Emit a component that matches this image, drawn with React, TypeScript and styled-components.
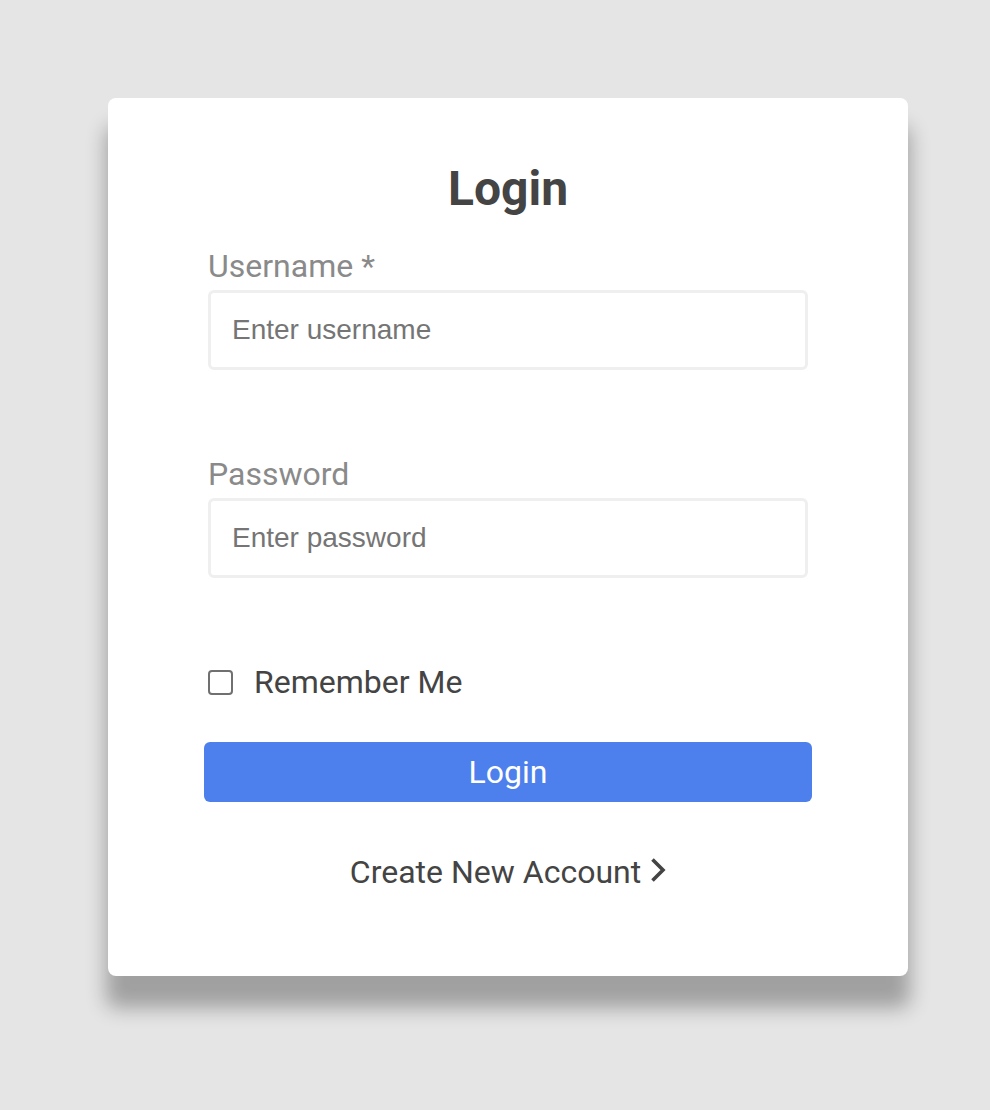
import React from "react";
import styled, { createGlobalStyle } from "styled-components";

const Global = createGlobalStyle`
  html, body { margin: 0; padding: 0; background: #e5e5e5; }
  body { font-family: Roboto, "Liberation Sans", sans-serif; }
  * { box-sizing: border-box; }
`;

const Page = styled.div`
  min-height: 1110px;
  padding: 98px 0 0 26px;
  display: flex;
  justify-content: center;
  align-items: flex-start;
`;

const Card = styled.form`
  width: 800px;
  background: #ffffff;
  border-radius: 8px;
  box-shadow: 0 30px 20px 2px rgba(0, 0, 0, 0.3);
  padding: 63px 100px 85px;
  display: flex;
  flex-direction: column;
`;

const Title = styled.h1`
  margin: 0 0 30px;
  font-family: Roboto, sans-serif;
  font-weight: 700;
  font-size: 48px;
  line-height: 56px;
  color: #444444;
  text-align: center;
`;

const Field = styled.div<{ $gap: number }>`
  display: flex;
  flex-direction: column;
  gap: 5px;
  margin-bottom: ${(p) => p.$gap}px;
`;

const Label = styled.label`
  font-family: Roboto, sans-serif;
  font-size: 32px;
  color: #8a8a8a;
`;

const Input = styled.input`
  width: 600px;
  height: 80px;
  border: 3px solid #efefef;
  border-radius: 6px;
  padding: 0 21px;
  font-family: "Liberation Sans", Arial, sans-serif;
  font-size: 28px;
  color: #333;
  outline: none;
  &::placeholder { color: #757575; }
`;

const CheckRow = styled.label`
  display: flex;
  align-items: center;
  gap: 21px;
  font-family: Roboto, sans-serif;
  font-size: 32px;
  color: #444444;
  margin-bottom: 41px;
`;

const Check = styled.input`
  appearance: none;
  margin: 0;
  width: 25px;
  height: 25px;
  border: 2px solid #707070;
  border-radius: 4px;
  background: #fff;
`;

const Button = styled.button`
  margin: 0 -4px;
  height: 60px;
  border: none;
  border-radius: 6px;
  background: #4d80ec;
  color: #ffffff;
  font-family: Roboto, sans-serif;
  font-size: 32px;
  cursor: pointer;
`;

const CreateLink = styled.a`
  margin-top: 51px;
  align-self: center;
  display: flex;
  align-items: center;
  gap: 9px;
  font-family: Roboto, sans-serif;
  font-size: 32px;
  color: #444444;
  text-decoration: none;
`;

const ChevronSvg = styled.svg`
  margin-bottom: 4px;
`;

const Chevron = () => (
  <ChevronSvg width="16" height="24" viewBox="0 0 16 24" fill="none">
    <path d="M2.5 1.5 L13 12 L2.5 22.5" stroke="#444" strokeWidth="3.6" strokeLinecap="butt" strokeLinejoin="miter" />
  </ChevronSvg>
);

export default function App() {
  return (
    <>
      <Global />
      <Page>
        <Card onSubmit={(e) => e.preventDefault()}>
          <Title>Login</Title>
          <Field $gap={85}>
            <Label htmlFor="username">Username *</Label>
            <Input id="username" placeholder="Enter username" />
          </Field>
          <Field $gap={85}>
            <Label htmlFor="password">Password</Label>
            <Input id="password" type="password" placeholder="Enter password" />
          </Field>
          <CheckRow>
            <Check type="checkbox" />
            Remember Me
          </CheckRow>
          <Button type="submit">Login</Button>
          <CreateLink href="#">
            Create New Account
            <Chevron />
          </CreateLink>
        </Card>
      </Page>
    </>
  );
}
